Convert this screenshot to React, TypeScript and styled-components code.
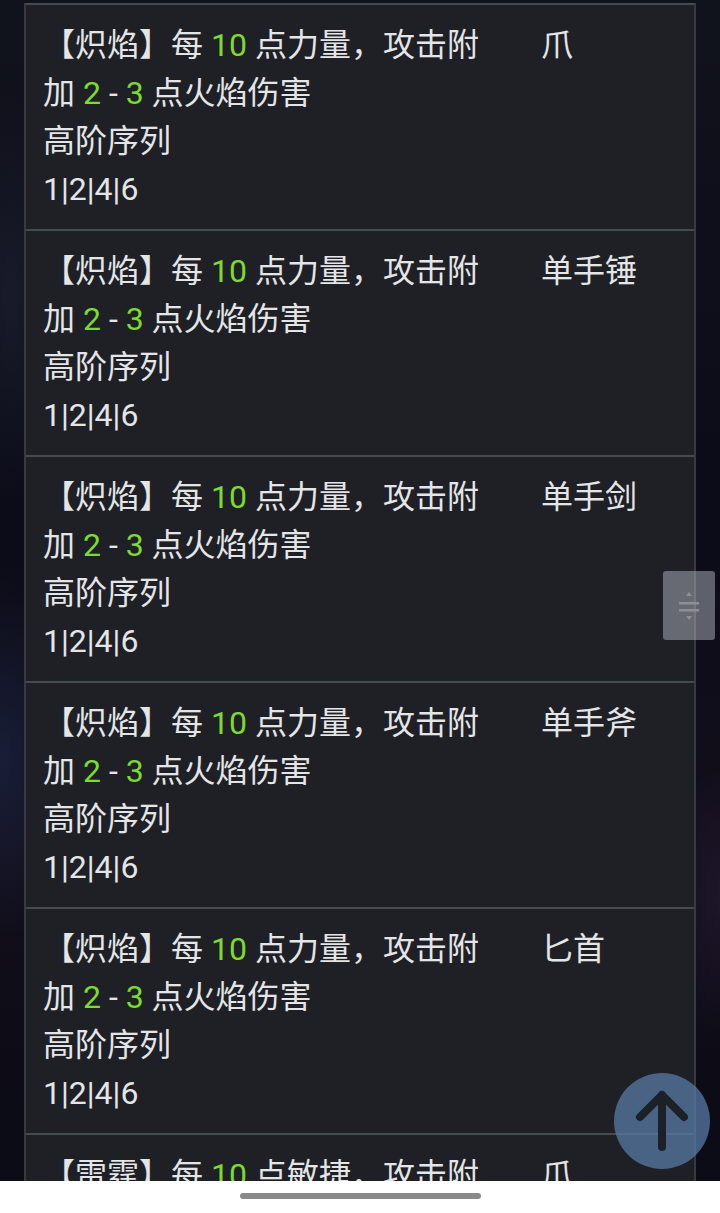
import React from "react";
import styled, { createGlobalStyle } from "styled-components";

const Global = createGlobalStyle`
  html, body { margin: 0; padding: 0; }
  body {
    background: #0b0d17;
    font-family: Roboto, "Noto Sans CJK SC", "Noto Sans", sans-serif;
  }
`;

const Screen = styled.div`
  position: relative;
  width: 720px;
  height: 1213px;
  display: flex;
  flex-direction: column;
  overflow: hidden;
  background:
    radial-gradient(ellipse 120px 260px at 0px 760px, rgba(40, 60, 110, 0.35), transparent 70%),
    radial-gradient(ellipse 80px 200px at 720px 900px, rgba(60, 40, 80, 0.3), transparent 70%),
    radial-gradient(ellipse 90px 300px at 10px 300px, rgba(45, 50, 70, 0.35), transparent 70%),
    linear-gradient(180deg, #10121c 0%, #0b0c18 40%, #120e1a 70%, #0a0b14 100%);
`;

const Viewport = styled.div`
  flex: 1;
  overflow: hidden;
  padding-top: 3px;
`;

const Panel = styled.div`
  margin-left: 24px;
  width: 672px;
  box-sizing: border-box;
  border-left: 2px solid #363a41;
  border-right: 2px solid #363a41;
  background: #1e2026;
`;

const Row = styled.div`
  display: grid;
  grid-template-columns: 1fr 171px;
  border-top: 2px solid #464a51;
`;

const Cell = styled.div<{ $left?: boolean }>`
  padding: 16px 18px 16px ${(p) => (p.$left ? "17px" : "18px")};
  color: #e4e5e7;
  font-size: 32px;
  line-height: 48px;
  letter-spacing: 0;
`;

const Num = styled.span`
  color: #7cdb2c;
`;

const NavBar = styled.div`
  height: 32px;
  flex: none;
  background: #ffffff;
  display: flex;
  justify-content: center;
  padding-top: 12px;
  box-sizing: border-box;
`;

const Pill = styled.div`
  width: 241px;
  height: 6px;
  border-radius: 3px;
  background: #8a8a8a;
`;

const ScrollHandle = styled.div`
  position: absolute;
  left: 663px;
  top: 571px;
  width: 52px;
  height: 69px;
  border-radius: 3px;
  background: rgba(175, 180, 190, 0.5);
  display: flex;
  align-items: center;
  justify-content: center;
`;

const TopButton = styled.div`
  position: absolute;
  left: 614px;
  top: 1073px;
  width: 96px;
  height: 96px;
  border-radius: 50%;
  background: rgba(90, 125, 170, 0.72);
  display: flex;
  align-items: center;
  justify-content: center;
`;

type Item = { tag: string; stat: string; weapon: string };

const items: Item[] = [
  { tag: "炽焰", stat: "力量", weapon: "爪" },
  { tag: "炽焰", stat: "力量", weapon: "单手锤" },
  { tag: "炽焰", stat: "力量", weapon: "单手剑" },
  { tag: "炽焰", stat: "力量", weapon: "单手斧" },
  { tag: "炽焰", stat: "力量", weapon: "匕首" },
  { tag: "雷霆", stat: "敏捷", weapon: "爪" },
];

export default function App() {
  return (
    <Screen>
      <Global />
      <Viewport>
        <Panel>
          {items.map((it, i) => (
            <Row key={i}>
              <Cell $left>
                【{it.tag}】每 <Num>10</Num> 点{it.stat}，攻击附加 <Num>2</Num> - <Num>3</Num> 点
                {it.tag === "炽焰" ? "火焰" : "闪电"}伤害
                <br />
                高阶序列
                <br />
                1|2|4|6
              </Cell>
              <Cell>{it.weapon}</Cell>
            </Row>
          ))}
        </Panel>
      </Viewport>
      <NavBar>
        <Pill />
      </NavBar>
      <ScrollHandle>
        <svg width="22" height="40" viewBox="0 0 22 40">
          <path d="M11 6 L14 10 L8 10 Z" fill="#8d9098" />
          <rect x="1" y="16" width="20" height="2.5" fill="#8d9098" />
          <rect x="1" y="23" width="20" height="2.5" fill="#8d9098" />
          <path d="M11 34 L14 30 L8 30 Z" fill="#8d9098" />
        </svg>
      </ScrollHandle>
      <TopButton>
        <svg width="60" height="64" viewBox="0 0 60 64">
          <path
            d="M30 58 V6 M8 28 L30 6 L52 28"
            stroke="#1c2027"
            strokeWidth="8"
            strokeLinecap="round"
            strokeLinejoin="round"
            fill="none"
          />
        </svg>
      </TopButton>
    </Screen>
  );
}
